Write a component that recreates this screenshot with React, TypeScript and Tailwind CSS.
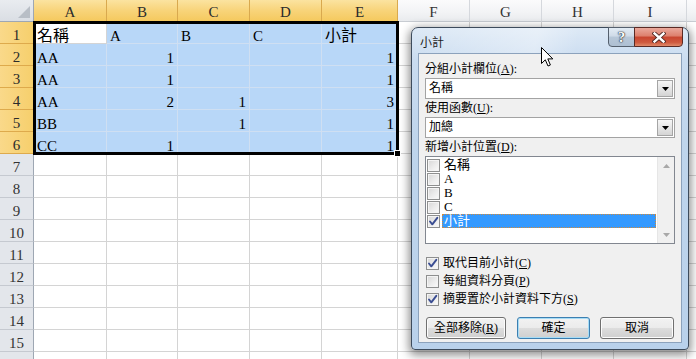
import React from 'react';

type Col = { l: string; w: string; sel: boolean };
const cols: Col[] = [
  { l: 'A', w: 'w-[73px]', sel: true },
  { l: 'B', w: 'w-[71px]', sel: true },
  { l: 'C', w: 'w-[72px]', sel: true },
  { l: 'D', w: 'w-[72px]', sel: true },
  { l: 'E', w: 'w-[76px]', sel: true },
  { l: 'F', w: 'w-[72px]', sel: false },
  { l: 'G', w: 'w-[72px]', sel: false },
  { l: 'H', w: 'w-[72px]', sel: false },
  { l: 'I', w: 'w-[73px]', sel: false },
  { l: '', w: 'w-[72px]', sel: false },
];

type Cell = { t: string; r?: boolean; cjk?: boolean } | null;
const data: Cell[][] = [
  [{ t: '名稱', cjk: true }, { t: 'A' }, { t: 'B' }, { t: 'C' }, { t: '小計', cjk: true }],
  [{ t: 'AA' }, { t: '1', r: true }, null, null, { t: '1', r: true }],
  [{ t: 'AA' }, { t: '1', r: true }, null, null, { t: '1', r: true }],
  [{ t: 'AA' }, { t: '2', r: true }, { t: '1', r: true }, null, { t: '3', r: true }],
  [{ t: 'BB' }, null, { t: '1', r: true }, null, { t: '1', r: true }],
  [{ t: 'CC' }, { t: '1', r: true }, null, null, { t: '1', r: true }],
];

const rowCount = 16;

function CheckMark() {
  return (
    <svg width="11" height="11" viewBox="0 0 11 11" className="block">
      <path d="M2 5.5 L4.3 8.3 L9.3 1.8" fill="none" stroke="#3a4d92" strokeWidth="1.9" strokeLinecap="round" strokeLinejoin="round" />
    </svg>
  );
}

function Box({ checked }: { checked: boolean }) {
  return (
    <span className="flex h-[13px] w-[13px] shrink-0 items-center justify-center border border-[#8e8f8f] bg-[linear-gradient(135deg,#d6d6d6_0%,#ececec_55%,#fbfbfb_100%)] shadow-[inset_0_0_0_1px_#f4f4f4]">
      {checked ? <CheckMark /> : null}
    </span>
  );
}

function Combo({ text }: { text: string }) {
  return (
    <div className="relative h-[21px] shrink-0 border border-[#a3a3a3] bg-white pl-[3px] leading-[19px]">
      {text}
      <div className="absolute right-[1px] top-[1px] flex h-[17px] w-[16px] items-center justify-center border border-[#a5a5a5] bg-[linear-gradient(180deg,#f6f6f6_0%,#e6e6e6_50%,#d4d4d4_100%)]">
        <svg width="7" height="4" viewBox="0 0 7 4" className="block">
          <path d="M0 0 H7 L3.5 4 Z" fill="#000" />
        </svg>
      </div>
    </div>
  );
}

function ListItem({ text, checked, selected }: { text: string; checked: boolean; selected?: boolean }) {
  return (
    <div className="flex h-[14px] items-center pl-[1px]">
      <Box checked={checked} />
      <div
        className={
          selected
            ? 'ml-[2px] flex h-[14px] flex-1 items-center border border-dotted border-[#d08a3c] bg-[#3399ff] pl-[1px] text-[13px] text-white'
            : 'ml-[2px] flex h-[14px] flex-1 items-center pl-[2px] text-[13px]'
        }
      >
        {text}
      </div>
    </div>
  );
}

function Btn({ children, w, ml, def }: { children: React.ReactNode; w: string; ml: string; def?: boolean }) {
  return (
    <div
      className={`${w} ${ml} flex h-[22px] items-center justify-center rounded-[3px] border ${
        def
          ? 'border-[#3c7fb1] shadow-[inset_0_0_0_1px_#a6dcf6]'
          : 'border-[#707070] shadow-[inset_0_0_0_1px_#fcfcfc]'
      } bg-[linear-gradient(180deg,#f2f2f2_0%,#ebebeb_50%,#dddddd_51%,#cfcfcf_100%)]`}
    >
      {children}
    </div>
  );
}

function Dialog() {
  return (
    <div className="absolute left-[411px] top-[27px] flex h-[323px] w-[278px] flex-col rounded-b-[4px] rounded-t-[7px] border border-[#3d4b5c] bg-[linear-gradient(180deg,#dde9f6_0%,#cadcf0_10%,#bfd5ec_35%,#b9d1eb_100%)] shadow-[0_3px_10px_2px_rgba(0,0,0,0.45)] font-['Liberation_Serif','Noto_Sans_CJK_TC',serif] text-[12px] text-black">
      <div className="relative h-[25px] shrink-0 rounded-t-[6px] bg-[linear-gradient(100deg,rgba(255,255,255,0)_0%,rgba(255,255,255,0.35)_45%,rgba(255,255,255,0)_60%)] pl-[8px] pt-[8px] leading-[14px] text-[#1e1e1e]">
        小計
        <div className="absolute right-[5px] top-[-1px] flex">
          <div className="flex h-[20px] w-[27px] items-center justify-center rounded-bl-[4px] border border-[#55606e] bg-[linear-gradient(180deg,#e3ecf5_0%,#cfdbe8_45%,#b7c7d8_50%,#aebfd2_100%)] text-[15px] font-bold leading-none text-white [text-shadow:0_0_1px_#2a333d,0_0_1px_#2a333d,0_0_2px_#2a333d]">
            ?
          </div>
          <div className="-ml-[1px] flex h-[20px] w-[49px] items-center justify-center rounded-br-[4px] border border-[#5a2a24] bg-[linear-gradient(180deg,#eaa99c_0%,#dd7f6c_45%,#c8452f_50%,#cf5a3f_80%,#e08a6a_100%)]">
            <svg width="14" height="11" viewBox="0 0 14 11" className="block">
              <path d="M2.5 1.5 L11.5 9.5 M11.5 1.5 L2.5 9.5" stroke="#4a2420" strokeWidth="4.2" strokeLinecap="square" />
              <path d="M2.5 1.5 L11.5 9.5 M11.5 1.5 L2.5 9.5" stroke="#ffffff" strokeWidth="2.4" strokeLinecap="square" />
            </svg>
          </div>
        </div>
      </div>
      <div className="mx-[6px] flex h-[290px] shrink-0 flex-col border border-[#8ca2bc] bg-[#f0f0f0] px-[6px]">
        <div className="mt-[6px] h-[18px] shrink-0 leading-[18px]">
          分組小計欄位(<span className="underline underline-offset-1">A</span>):
        </div>
        <Combo text="名稱" />
        <div className="h-[18px] shrink-0 leading-[18px]">
          使用函數(<span className="underline underline-offset-1">U</span>):
        </div>
        <Combo text="加總" />
        <div className="h-[18px] shrink-0 leading-[18px]">
          新增小計位置(<span className="underline underline-offset-1">D</span>):
        </div>
        <div className="relative h-[88px] shrink-0 border border-[#828790] bg-white pt-[1px] pr-[18px] leading-[14px]">
          <ListItem text="名稱" checked={false} />
          <ListItem text="A" checked={false} />
          <ListItem text="B" checked={false} />
          <ListItem text="C" checked={false} />
          <ListItem text="小計" checked selected />
          <div className="absolute bottom-0 right-0 top-0 flex w-[17px] flex-col justify-between border-l border-[#e6e6e6] bg-[#f0f0f0]">
            <div className="flex h-[17px] items-center justify-center">
              <svg width="7" height="4" viewBox="0 0 7 4" className="block">
                <path d="M0 4 H7 L3.5 0 Z" fill="#a8a8a8" />
              </svg>
            </div>
            <div className="flex h-[17px] items-center justify-center">
              <svg width="7" height="4" viewBox="0 0 7 4" className="block">
                <path d="M0 0 H7 L3.5 4 Z" fill="#a8a8a8" />
              </svg>
            </div>
          </div>
        </div>
        <div className="mt-[10px] flex shrink-0 flex-col">
          <div className="flex h-[18px] items-center pl-[1px]">
            <Box checked />
            <span className="ml-[4px] leading-[18px]">
              取代目前小計(<span className="underline underline-offset-1">C</span>)
            </span>
          </div>
          <div className="flex h-[18px] items-center pl-[1px]">
            <Box checked={false} />
            <span className="ml-[4px] leading-[18px]">
              每組資料分頁(<span className="underline underline-offset-1">P</span>)
            </span>
          </div>
          <div className="flex h-[18px] items-center pl-[1px]">
            <Box checked />
            <span className="ml-[4px] leading-[18px]">
              摘要置於小計資料下方(<span className="underline underline-offset-1">S</span>)
            </span>
          </div>
        </div>
        <div className="mt-[9px] flex shrink-0">
          <Btn w="w-[80px]" ml="ml-[1px]">
            全部移除(<span className="underline underline-offset-1">R</span>)
          </Btn>
          <Btn w="w-[73px]" ml="ml-[11px]" def>
            確定
          </Btn>
          <Btn w="w-[74px]" ml="ml-[10px]">
            取消
          </Btn>
        </div>
      </div>
    </div>
  );
}

function Cursor() {
  return (
    <svg className="absolute left-[541px] top-[47px]" width="13" height="20" viewBox="0 0 13 20">
      <path d="M0.5 0.5 L0.5 16.5 L4.3 12.8 L7 19 L9.4 18 L6.8 11.9 L11.8 11.9 Z" fill="#fff" stroke="#000" strokeWidth="1" strokeLinejoin="miter" />
    </svg>
  );
}

export default function App() {
  return (
    <div className="relative h-[359px] w-[696px] overflow-hidden bg-white font-['Liberation_Serif','Noto_Sans_CJK_TC',serif] text-[15px] text-black">
      <div className="flex h-[22px]">
        <div className="relative h-[22px] w-[34px] shrink-0 border-b border-r border-[#9ea7b3] bg-[linear-gradient(180deg,#e9ecf0,#dadee4)]">
          <svg className="absolute bottom-[3px] right-[3px]" width="12" height="12" viewBox="0 0 12 12">
            <path d="M12 0 L12 12 L0 12 Z" fill="#b8bec6" />
          </svg>
        </div>
        {cols.map((c, i) => (
          <div
            key={i}
            className={`${c.w} h-[22px] shrink-0 border-b border-r pt-[4px] text-center leading-[16px] ${
              c.sel
                ? 'border-b-[#e3a43c] border-r-[#d9a94e] bg-[linear-gradient(180deg,#fbe3a0_0%,#f8d47a_50%,#f5c95e_100%)] text-[#2b2b2b]'
                : 'border-b-[#c8ccd2] border-r-[#d5d8dd] bg-[linear-gradient(180deg,#fbfbfc_0%,#f2f3f5_60%,#e9ebee_100%)] text-[#333]'
            }`}
          >
            {c.l}
          </div>
        ))}
      </div>
      {Array.from({ length: rowCount }, (_, ri) => {
        const rowSel = ri < 6;
        return (
          <div key={ri} className="flex h-[22px]">
            <div
              className={`h-[22px] w-[34px] shrink-0 border-b border-r pt-[5px] text-center leading-[16px] ${
                rowSel
                  ? 'border-b-[#deaa4c] border-r-[#e3a43c] bg-[linear-gradient(90deg,#fad98a_0%,#f6cf6c_100%)] text-[#2b2b2b]'
                  : 'border-b-[#c5c9d0] border-r-[#9ea7b3] bg-[#e3e6eb] text-[#333]'
              }`}
            >
              {ri + 1}
            </div>
            {cols.map((c, ci) => {
              const inSel = rowSel && ci < 5;
              const active = ri === 0 && ci === 0;
              const cell = rowSel && ci < 5 ? data[ri][ci] : null;
              return (
                <div
                  key={ci}
                  className={`${c.w} h-[22px] shrink-0 overflow-hidden whitespace-nowrap border-b border-r px-[3px] pt-[6px] leading-[16px] ${
                    active
                      ? 'border-[#d4d4d4] bg-white'
                      : inSel
                      ? 'border-[#cfdff2] bg-[#b8d7f8]'
                      : 'border-[#d4d4d4] bg-white'
                  } ${cell && cell.r ? 'text-right' : 'text-left'}`}
                >
                  {cell ? (cell.cjk ? <span className="text-[16px]">{cell.t}</span> : cell.t) : null}
                </div>
              );
            })}
          </div>
        );
      })}
      <div className="pointer-events-none absolute left-[33px] top-[21px] h-[134px] w-[366px] border-[3px] border-black" />
      <div className="absolute left-[394px] top-[150px] h-[7px] w-[7px] border border-white bg-black" />
      <Dialog />
      <Cursor />
    </div>
  );
}
